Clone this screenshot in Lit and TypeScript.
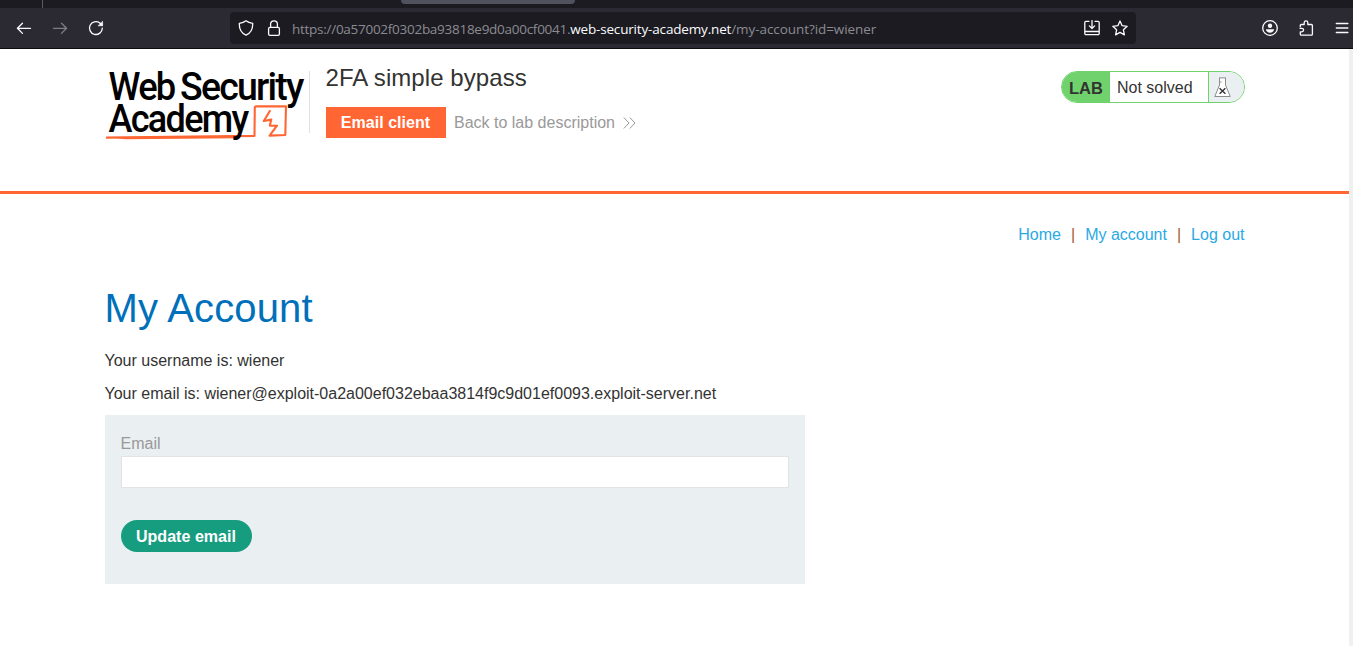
import { LitElement, html, css, svg } from "lit";
import { customElement } from "lit/decorators.js";

@customElement("browser-bar")
class BrowserBar extends LitElement {
  static styles = css`
    :host { display: block; }
    .tabs { height: 8px; background: #1c1b22; display: flex; }
    .sep { width: 1px; height: 8px; margin-left: 42px; background: #5b5a63; }
    .tab { width: 174px; height: 4px; margin-left: 358px; background: #52525e; border-radius: 0 0 4px 4px; }
    .bar { height: 41px; box-sizing: border-box; background: #2b2a33; border-bottom: 1px solid #0c0c0d; display: flex; align-items: center; padding: 0 3px 0 16px; }
    svg { display: block; flex: none; fill: none; stroke: #fbfbfe; stroke-width: 1.3; stroke-linecap: round; stroke-linejoin: round; }
    .nav { display: flex; gap: 20px; width: 214px; }
    .dim { opacity: 0.4; }
    .field { width: 906px; height: 32px; box-sizing: border-box; padding: 0 8px; background: #1c1b22; border-radius: 4px; display: flex; align-items: center; gap: 12px; }
    .url { flex: 1; margin: 1px 0 0 -2px; white-space: nowrap; color: #8b8b91; font: 13.5px/20px "Open Sans", "Noto Sans", sans-serif; }
    .url span { display: inline-block; }
    .a { letter-spacing: -0.27px; }
    .b { color: #fbfbfe; letter-spacing: -0.17px; }
    .c { letter-spacing: -0.07px; }
    .tools { display: flex; gap: 20px; margin-left: auto; }
  `;
  render() {
    const icon = (body: unknown, cls = "") => html`<svg class=${cls} width="16" height="16" viewBox="0 0 16 16">${body}</svg>`;
    return html`
      <div class="tabs"><div class="sep"></div><div class="tab"></div></div>
      <div class="bar">
        <div class="nav">
          ${icon(svg`<path d="M14.500 8.300H1.500M6.500 3.200L1.400 8.300l5.100 5.100"/>`)}
          ${icon(svg`<path d="M1.500 8.300h13M9.500 3.200l5.100 5.100-5.100 5.100"/>`, "dim")}
          ${icon(svg`<path d="M14.300 8.200A6.400 6.400 0 1 1 11.800 3L14 5"/><path d="M14.600 1.600v4.200h-4.200z" fill="#fbfbfe" stroke-width=".6"/>`)}
        </div>
        <div class="field">
          ${icon(svg`<path d="M8 .8c1.800 1.500 4.200 2.200 6.700 2.500.2 5.500-1.500 9.700-6.700 11.900C2.800 13 1.100 8.800 1.300 3.300 3.800 3 6.200 2.300 8 .8z"/>`)}
          ${icon(svg`<rect x="2.600" y="7.400" width="10.800" height="7.900" rx="1.400"/><path d="M4.600 7.200V4.300a3.400 3.400 0 0 1 6.800 0v2.900"/>`)}
          <div class="url"><span class="a">https://0a57002f0302ba93818e9d0a00cf0041.</span><span class="b">web-security-academy.net</span><span class="c">/my-account?id=wiener</span></div>
          ${icon(svg`<path d="M5 1.300H2a1.200 1.200 0 0 0-1.200 1.200v11A1.200 1.200 0 0 0 2 14.700h12a1.200 1.200 0 0 0 1.200-1.200v-11A1.200 1.200 0 0 0 14 1.300h-3M1 11.500h14M8 .5v7.600M5.400 5.900L8 8.500l2.600-2.600"/>`)}
          ${icon(svg`<path d="M8 1l2.100 4.700 5.100.6-3.800 3.500 1 5.100L8 12.400l-4.400 2.500 1-5.100L.8 6.300l5.100-.6z"/>`)}
        </div>
        <div class="tools">
          ${icon(svg`<circle cx="8" cy="8" r="7.300"/><circle cx="8" cy="5.800" r="2.200" fill="#fbfbfe" stroke="none"/><path d="M3.900 9.300h8.200c-.3 2.100-2 3.400-4.100 3.400s-3.800-1.300-4.100-3.400z" fill="#fbfbfe" stroke="none"/>`)}
          ${icon(svg`<path d="M2.300 6.700V5.500a1 1 0 0 1 1-1h2.900V2.600a1.800 1.800 0 0 1 3.600 0v1.900h3.600a1 1 0 0 1 1 1v8.700a1 1 0 0 1-1 1H3.300a1 1 0 0 1-1-1v-2.400h1.500a1.700 1.700 0 0 0 0-3.500H2"/>`)}
          ${icon(svg`<path d="M2.300 3.500h11.600M2.300 8h11.600M2.300 12.500h11.600"/>`)}
        </div>
      </div>`;
  }
}

@customElement("academy-header")
class AcademyHeader extends LitElement {
  static styles = css`
    :host { display: block; height: 142px; border-bottom: 3px solid #ff6633; }
    .wrap { width: 1140px; margin: 0 auto; display: flex; align-items: flex-start; }
    .logo { display: block; width: 204px; height: 80px; margin-top: 16px; overflow: visible; }
    .logo text { font-family: Roboto, "Liberation Sans", sans-serif; font-weight: 500; font-size: 38px; letter-spacing: -1.8px; fill: #000; }
    .rule { width: 1px; height: 62px; margin: 22px 0 0; background: #e0e0e3; }
    .info { margin: 14px 0 0 16px; }
    h2 { margin: 0; font-size: 24px; line-height: 30px; font-weight: 400; letter-spacing: 0.07px; }
    .row { display: flex; align-items: center; margin-top: 14px; }
    .client { width: 120px; height: 31px; line-height: 31px; text-align: center; background: #ff6633; color: #fff; font-weight: 700; letter-spacing: 0.04px; }
    .back { display: flex; align-items: center; color: #999; margin-left: 8.500px; }
    .back svg { margin-left: 8.500px; }
    .status { margin: 22px 0 0 auto; width: 184px; height: 32px; box-sizing: border-box; border: 1px solid #70d26d; border-radius: 16px; overflow: hidden; display: flex; line-height: 32px; }
    .lab { width: 48px; box-sizing: border-box; padding-left: 1px; background: #70d26d; font-weight: 700; text-align: center; font-size: 16.500px; line-height: 33px; }
    .state { width: 99px; box-sizing: border-box; padding-left: 7.500px; border-right: 1px solid #70d26d; }
    .flask { flex: 1; background: #eaeff2; }
    .flask svg { display: block; margin: 5px 0 0 5px; }
  `;
  render() {
    return html`<div class="wrap">
      <svg class="logo" viewBox="105 65 204 80">
        <text x="108.500" y="99.800" textLength="66" lengthAdjust="spacingAndGlyphs">Web</text>
        <text x="180" y="99.800" textLength="122.500" lengthAdjust="spacingAndGlyphs">Security</text>
        <path d="M106 137.600L254.500 135.900L254.800 107Q255 106.300 257 106.400L286 106.200L285.300 135L269.600 135.600L277 125.700L269.800 125.600L271.300 119.600L263.800 121L270.300 110.300" fill="none" stroke="#ff6633" stroke-width="2.100" stroke-linejoin="round"/>
        <path d="M106 137L240 136.600L239 138.200L125 139.200z" fill="#ff6633"/>
        <text x="108.500" y="132.300" textLength="139" lengthAdjust="spacingAndGlyphs">Academy</text>
      </svg>
      <div class="rule"></div>
      <div class="info">
        <h2>2FA simple bypass</h2>
        <div class="row">
          <div class="client">Email client</div>
          <div class="back">Back to lab description
            <svg width="13" height="12" viewBox="0 0 13 12" fill="none" stroke="#999"><path d="M.8.500L6 6 .8 11.500M6.800.500L12 6l-5.200 5.500"/></svg>
          </div>
        </div>
      </div>
      <div class="status">
        <div class="lab">LAB</div>
        <div class="state">Not solved</div>
        <div class="flask"><svg width="17" height="21" viewBox="0 0 17 21" fill="#fff" stroke="#8c8c8c"><path d="M5.500 1v7L.8 19.500h15.400L11.500 8V1"/><path d="M5 .900h7M5.500 5h2"/><path d="M5.600 11.200l5.800 5.600m0-5.600l-5.800 5.600" stroke="#333" stroke-width="1.400"/></svg></div>
      </div>
    </div>`;
  }
}

@customElement("account-page")
class AccountPage extends LitElement {
  static styles = css`
    :host { display: block; width: 1140px; margin: 0 auto; }
    nav { display: flex; justify-content: flex-end; gap: 10px; padding-top: 31px; line-height: 20px; }
    nav a { color: #29a9e5; }
    nav i { font-style: normal; color: #a45e24; }
    h1 { margin: 39px 0 0; color: #0070ba; font-size: 40px; line-height: 48px; font-weight: 400; letter-spacing: 0.15px; }
    p { margin: 0; line-height: 20px; }
    .user { margin-top: 19px; }
    .mail { margin-top: 13px; }
    form { width: 700px; height: 169px; box-sizing: border-box; margin-top: 11px; padding: 19px 16px 0; background: #eaeff2; }
    label { display: block; color: #999; line-height: 20px; }
    input { display: block; width: 100%; height: 32px; box-sizing: border-box; margin: 2px 0 32px; border: 1px solid #e1e3e5; border-radius: 0; background: #fff; outline: none; }
    button { display: block; width: 131px; height: 32px; padding: 1px 0 0; border: 0; border-radius: 16px; background: #169c7f; color: #fff; font: bold 16px/31px "Liberation Sans", Arial, sans-serif; letter-spacing: 0.04px; }
  `;
  render() {
    return html`
      <nav><a>Home</a><i>|</i><a>My account</a><i>|</i><a>Log out</a></nav>
      <h1>My Account</h1>
      <p class="user">Your username is: wiener</p>
      <p class="mail">Your email is: wiener@exploit-0a2a00ef032ebaa3814f9c9d01ef0093.exploit-server.net</p>
      <form>
        <label for="email">Email</label>
        <input id="email" type="email" />
        <button type="button">Update email</button>
      </form>`;
  }
}

@customElement("app-root")
class AppRoot extends LitElement {
  static styles = css`
    :host { display: flex; flex-direction: column; height: 100vh; overflow: hidden; background: #fff; color: #333332; font: 16px/20px "Liberation Sans", Arial, sans-serif; }
    .view { flex: 1; border-right: 4px solid #f0f0f0; }
  `;
  render() {
    return html`<browser-bar></browser-bar>
      <div class="view"><academy-header></academy-header><account-page></account-page></div>`;
  }
}
